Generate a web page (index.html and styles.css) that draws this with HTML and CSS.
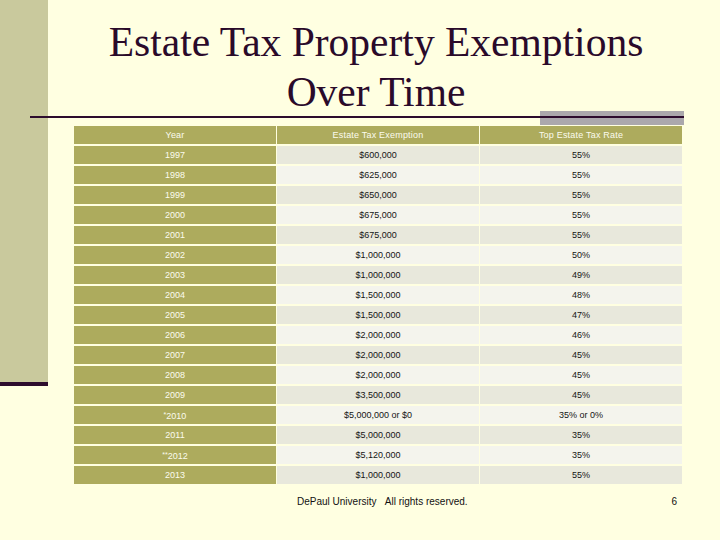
FILE: index.html
```html
<!DOCTYPE html>
<html>
<head>
<meta charset="utf-8">
<title>Estate Tax Property Exemptions Over Time</title>
<link rel="stylesheet" href="styles.css">
</head>
<body>
<div class="slide">
  <div class="side">
    <div class="side-fill"></div>
    <div class="side-bar"></div>
  </div>
  <div class="main">
    <h1 class="title">Estate Tax Property Exemptions<br>Over Time</h1>
    <div class="rule"></div>
    <div class="table">
      <div class="cell head">Year</div><div class="cell head">Estate Tax Exemption</div><div class="cell head">Top Estate Tax Rate</div>
      <div class="cell year">1997</div><div class="cell odd">$600,000</div><div class="cell odd">55%</div>
      <div class="cell year">1998</div><div class="cell even">$625,000</div><div class="cell even">55%</div>
      <div class="cell year">1999</div><div class="cell odd">$650,000</div><div class="cell odd">55%</div>
      <div class="cell year">2000</div><div class="cell even">$675,000</div><div class="cell even">55%</div>
      <div class="cell year">2001</div><div class="cell odd">$675,000</div><div class="cell odd">55%</div>
      <div class="cell year">2002</div><div class="cell even">$1,000,000</div><div class="cell even">50%</div>
      <div class="cell year">2003</div><div class="cell odd">$1,000,000</div><div class="cell odd">49%</div>
      <div class="cell year">2004</div><div class="cell even">$1,500,000</div><div class="cell even">48%</div>
      <div class="cell year">2005</div><div class="cell odd">$1,500,000</div><div class="cell odd">47%</div>
      <div class="cell year">2006</div><div class="cell even">$2,000,000</div><div class="cell even">46%</div>
      <div class="cell year">2007</div><div class="cell odd">$2,000,000</div><div class="cell odd">45%</div>
      <div class="cell year">2008</div><div class="cell even">$2,000,000</div><div class="cell even">45%</div>
      <div class="cell year">2009</div><div class="cell odd">$3,500,000</div><div class="cell odd">45%</div>
      <div class="cell year"><span class="mark">*</span>2010</div><div class="cell even">$5,000,000 or $0</div><div class="cell even">35% or 0%</div>
      <div class="cell year">2011</div><div class="cell odd">$5,000,000</div><div class="cell odd">35%</div>
      <div class="cell year"><span class="mark">**</span>2012</div><div class="cell even">$5,120,000</div><div class="cell even">35%</div>
      <div class="cell year">2013</div><div class="cell odd">$1,000,000</div><div class="cell odd">55%</div>
    </div>
    <div class="footer">
      <span class="credit">DePaul University&nbsp;&nbsp;&nbsp;All rights reserved.</span>
      <span class="page">6</span>
    </div>
  </div>
</div>
</body>
</html>
```
FILE: styles.css
```css
html, body {
  margin: 0;
  padding: 0;
  background: #ffffe1;
}

.slide {
  width: 720px;
  height: 540px;
  display: grid;
  grid-template-columns: 48px 672px;
  background: #ffffe1;
  overflow: hidden;
}

.side {
  display: flex;
  flex-direction: column;
}

.side-fill {
  height: 382px;
  background: #c9c99d;
}

.side-bar {
  height: 4px;
  background: #2d0c2d;
}

.main {
  display: flex;
  flex-direction: column;
}

.title {
  margin: 17px 16px -6px 0;
  font-family: "Liberation Serif", "Times New Roman", serif;
  font-weight: normal;
  font-size: 41.5px;
  line-height: 50px;
  color: #2a0a2a;
  text-align: center;
}

.rule {
  margin-left: -18px;
  width: 654px;
  height: 14px;
  background:
    linear-gradient(#2d0c2d, #2d0c2d) 0 5px / 100% 2px no-repeat,
    linear-gradient(#aba8ac, #aba8ac) right 0 / 144px 14px no-repeat;
}

.table {
  margin: 1px 0 0 26px;
  width: 608px;
  display: grid;
  grid-template-columns: 202px 202px 202px;
  grid-auto-rows: 18px;
  column-gap: 1px;
  row-gap: 2px;
  font-family: "Liberation Sans", Arial, sans-serif;
  font-size: 9px;
}

.cell {
  line-height: 18px;
  text-align: center;
  white-space: nowrap;
}

.head, .year {
  background: #adab5d;
  color: #fbfbee;
}

.head {
  letter-spacing: 0.2px;
}

.odd {
  background: #e8e8dc;
  color: #141414;
}

.even {
  background: #f4f4ed;
  color: #141414;
}

.mark {
  font-size: 7px;
  vertical-align: 2px;
}

.footer {
  margin-top: 12px;
  padding: 0 43px 0 249px;
  display: flex;
  justify-content: space-between;
  font-family: "Liberation Sans", Arial, sans-serif;
  font-size: 10px;
  line-height: 12px;
  color: #111;
}
```
